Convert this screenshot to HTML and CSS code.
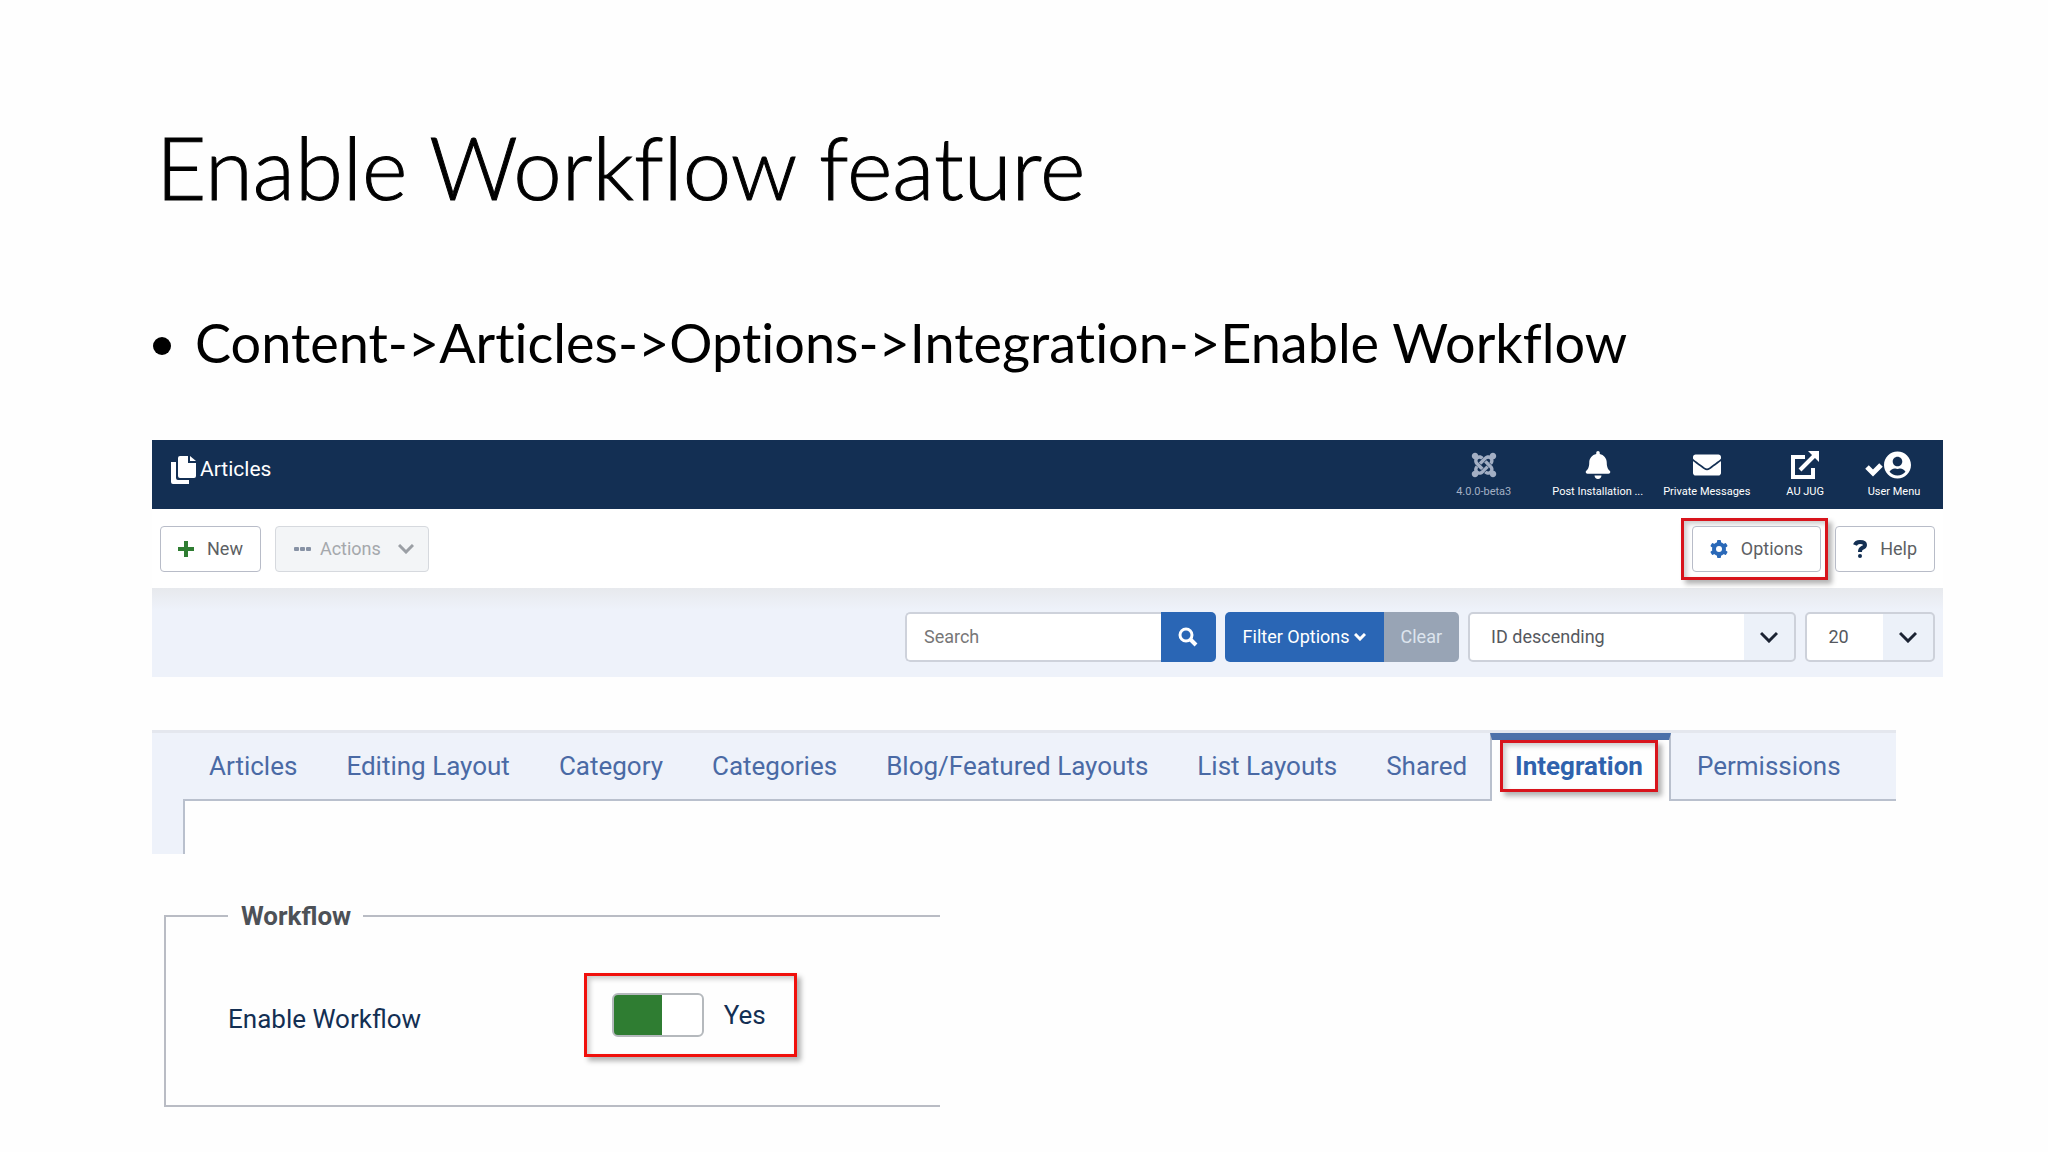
FILE: index.html
```
<!DOCTYPE html>
<html lang="en">
<head>
<meta charset="UTF-8">
<meta name="viewport" content="width=device-width, initial-scale=1.0">
<title>Enable Workflow feature</title>
<link rel="stylesheet" href="styles.css">
</head>
<body>

<main class="slide">
  <h1>Enable Workflow feature</h1>
  <ul class="points">
    <li>Content-&gt;Articles-&gt;Options-&gt;Integration-&gt;Enable Workflow</li>
  </ul>

  <section class="articles">
    <header class="topbar">
      <div class="page-title">
        <svg width="26" height="28" viewBox="0 0 26 28" fill="#fff"><path d="M0 6h5v16q0 2 2 2h11v4H2q-2 0-2-2z"/><path d="M9 0h8v7h8v13q0 2-2 2H9q-2 0-2-2V2q0-2 2-2z"/><path d="M19 0l6 5h-6z"/></svg>
        <span>Articles</span>
      </div>
      <nav class="top-links">
        <div class="top-item version">
          <svg width="26" height="28" viewBox="0 0 448 512" fill="currentColor"><path d="M.6 92.1C.6 58.8 27.4 32 60.4 32c30 0 54.5 21.9 59.2 50.2 32.6-7.6 67.1.6 96.5 30l-44.3 44.3c-20.5-20.5-42.6-16.3-55.4-3.5-14.3 14.3-14.3 37.9 0 52.2l99.5 99.5-44 44.3c-87.7-87.2-49.7-49.7-99.8-99.7-26.8-26.5-35-64.8-24.8-98.9C20.4 144.6.6 120.7.6 92.1zm129.5 116.4l44.3 44.3c10-10 89.7-89.7 99.7-99.8 14.3-14.3 37.6-14.3 51.9 0 12.8 12.8 17 35-3.5 55.4l44 44.3c31.2-31.2 38.5-67.6 28.9-101.2 29.2-4.1 51.9-29.2 51.9-59.5 0-33.2-26.8-60.1-59.8-60.1-30.3 0-55.4 22.5-59.5 51.6-33.8-9.9-71.7-1.5-98.3 25.1-18.3 19.1-71.1 71.5-99.6 99.9zm266.3 152.2c8.2-32.7-.9-68.5-26.3-93.9-11.8-12.2 5 4.7-99.5-99.7l-44.3 44.3 99.7 99.7c14.3 14.3 14.3 37.6 0 51.9-12.8 12.8-35 17-55.4-3.5l-44 44.3c27.6 30.2 68 38.8 102.7 28 5.5 27.4 29.7 48.1 58.9 48.1 33 0 59.8-26.8 59.8-60.1 0-30.2-22.5-55-51.6-59.1zm-84.3-53.1l-44-44.3c-87 86.4-50.4 50.4-99.7 99.8-14.3 14.3-37.6 14.3-51.9 0-13.1-13.4-16.9-35.3 3.2-55.4l-44-44.3c-30.2 30.2-38 65.2-29.5 98.3-26.7 6-46.2 29.9-46.2 58.2C0 453.2 26.8 480 59.8 480c28.6 0 52.5-19.8 58.6-46.7 32.7 8.2 68.5-.6 94.2-26 32.1-32 12.2-12.4 99.5-99.7z"/></svg>
          <span>4.0.0-beta3</span>
        </div>
        <a class="top-item post" href="#">
          <svg width="26" height="28" viewBox="0 0 448 512" fill="currentColor"><path d="M224 512c35.32 0 63.97-28.65 63.97-64H160.03c0 35.35 28.65 64 63.97 64zm215.39-149.71c-19.32-20.76-55.47-51.99-55.47-154.29 0-77.7-54.48-139.9-127.94-155.16V32c0-17.67-14.32-32-31.98-32s-31.98 14.33-31.98 32v20.84C118.56 68.1 64.08 130.3 64.08 208c0 102.3-36.15 133.53-55.47 154.29-6 6.45-8.66 14.16-8.61 21.71.11 16.4 12.98 32 32.1 32h383.8c19.12 0 32-15.6 32.1-32 .05-7.55-2.61-15.27-8.61-21.71z"/></svg>
          <span>Post Installation ...</span>
        </a>
        <a class="top-item messages" href="#">
          <svg width="28" height="28" viewBox="0 0 512 512" fill="currentColor"><path d="M502.3 190.8c3.9-3.1 9.7-.2 9.7 4.7V400c0 26.5-21.5 48-48 48H48c-26.5 0-48-21.5-48-48V195.6c0-5 5.7-7.8 9.7-4.7 22.4 17.4 52.1 39.5 154.1 113.6 21.1 15.4 56.7 47.8 92.2 47.6 35.7.3 72-32.8 92.3-47.6 102-74.1 131.6-96.3 154-113.7zM256 320c23.2.4 56.6-29.2 73.4-41.4 132.7-96.3 142.8-104.7 173.4-128.7 5.8-4.5 9.2-11.5 9.2-18.9v-19c0-26.5-21.5-48-48-48H48c-26.5 0-48 21.5-48 48v19c0 7.4 3.4 14.3 9.2 18.9 30.6 23.9 40.7 32.4 173.4 128.7 16.8 12.2 50.2 41.8 73.4 41.4z"/></svg>
          <span>Private Messages</span>
        </a>
        <a class="top-item" href="#">
          <svg width="28" height="28" viewBox="0 0 28 28" fill="none" stroke="currentColor" stroke-width="4"><path d="M14 6H2v20h20V17"/><path d="M9 19L23 5"/><path d="M17 0h11v11z" fill="currentColor" stroke="none"/></svg>
          <span>AU JUG</span>
        </a>
        <a class="top-item user" href="#">
          <svg width="46" height="28" viewBox="0 0 46 28" fill="currentColor"><path d="M2 16l6 6 8-8" fill="none" stroke="currentColor" stroke-width="5"/><svg x="19" y="0" width="27" height="28" viewBox="0 0 496 512"><path d="M248 8C111 8 0 119 0 256s111 248 248 248 248-111 248-248S385 8 248 8zm0 96c48.6 0 88 39.4 88 88s-39.4 88-88 88-88-39.4-88-88 39.4-88 88-88zm0 344c-58.7 0-111.3-26.6-146.5-68.2 18.8-35.4 55.6-59.8 98.5-59.8 2.4 0 4.8.4 7.1 1.1 13 4.2 26.6 6.9 40.9 6.9 14.3 0 28-2.7 40.9-6.9 2.3-.7 4.7-1.1 7.1-1.1 42.9 0 79.7 24.4 98.5 59.8C359.3 421.4 306.7 448 248 448z"/></svg></svg>
          <span>User Menu</span>
        </a>
      </nav>
    </header>

    <div class="toolbar">
      <button class="btn" type="button">
        <svg width="16" height="16" viewBox="0 0 16 16" stroke="#2f7d32" stroke-width="4"><path d="M8 0v16M0 8h16"/></svg>
        New
      </button>
      <button class="btn btn-actions" type="button" disabled>
        <svg width="18" height="6" viewBox="0 0 18 6" fill="#8792a5"><rect y="1" width="5" height="4" rx="1"/><rect x="6" y="1" width="5" height="4" rx="1"/><rect x="12" y="1" width="5" height="4" rx="1"/></svg>
        Actions
        <svg class="caret" width="16" height="10" viewBox="0 0 16 10" fill="none" stroke="#9b9fa5" stroke-width="3"><path d="M1 1l7 7 7-7"/></svg>
      </button>
      <span class="mark mark-options">
        <button class="btn" type="button">
          <svg width="18" height="18" viewBox="0 0 18 18"><g fill="#2a69b8"><rect x="7" y="0" width="4" height="18" rx="1"/><rect x="7" y="0" width="4" height="18" rx="1" transform="rotate(60 9 9)"/><rect x="7" y="0" width="4" height="18" rx="1" transform="rotate(120 9 9)"/><circle cx="9" cy="9" r="7"/></g><circle cx="9" cy="9" r="3" fill="#fff"/></svg>
          Options
        </button>
      </span>
      <button class="btn" type="button">
        <svg width="14" height="18" viewBox="0 0 14 18" fill="none" stroke="#132f53" stroke-width="4"><path d="M2 5Q3 2 7 2q5 0 5 3 0 2-3 3-2 1-2 4"/><circle cx="7" cy="16" r="2" fill="#132f53" stroke="none"/></svg>
        Help
      </button>
    </div>

    <form class="filters">
      <div class="group search">
        <input type="text" placeholder="Search" aria-label="Search">
        <button type="button" aria-label="Submit search">
          <svg width="20" height="20" viewBox="0 0 20 20" fill="none" stroke="#fff" stroke-width="3"><circle cx="8" cy="8" r="6"/><path d="M12 12l6 6" stroke-width="4"/></svg>
        </button>
      </div>
      <div class="group">
        <button class="filter-btn" type="button">Filter Options <svg width="12" height="8" viewBox="0 0 12 8" fill="none" stroke="#fff" stroke-width="3"><path d="M1 1l5 5 5-5"/></svg></button>
        <button class="clear-btn" type="button">Clear</button>
      </div>
      <div class="picker order">
        <select aria-label="Sort by"><option>ID descending</option></select>
        <svg width="18" height="12" viewBox="0 0 18 12" fill="none" stroke="#1b2333" stroke-width="3"><path d="M1 2l8 8 8-8"/></svg>
      </div>
      <div class="picker limit">
        <select aria-label="Items per page"><option>20</option></select>
        <svg width="18" height="12" viewBox="0 0 18 12" fill="none" stroke="#1b2333" stroke-width="3"><path d="M1 2l8 8 8-8"/></svg>
      </div>
    </form>
  </section>

  <section class="options">
    <nav class="tabs">
      <a href="#">Articles</a>
      <a href="#">Editing Layout</a>
      <a href="#">Category</a>
      <a href="#">Categories</a>
      <a href="#">Blog/Featured Layouts</a>
      <a href="#">List Layouts</a>
      <a href="#">Shared</a>
      <a class="active" href="#"><span class="mark">Integration</span></a>
      <a href="#">Permissions</a>
    </nav>
    <div class="tab-body"></div>
  </section>

  <fieldset class="workflow">
    <legend>Workflow</legend>
    <label class="name" for="workflow">Enable Workflow</label>
    <span class="mark mark-switch">
      <input type="checkbox" id="workflow" checked>
      <label for="workflow">Yes</label>
    </span>
  </fieldset>
</main>

</body>
</html>
```
FILE: styles.css
```
* {
  box-sizing: border-box;
}
body {
  margin: 0;
  background-color: #fefefe;
  font-family: Roboto, sans-serif;
  color: #132f53;
}
a {
  color: inherit;
  text-decoration: none;
}
svg {
  display: block;
  flex: none;
}
button, input, select {
  font-family: inherit;
  font-size: 18px;
}
.slide {
  padding: 117px 105px 40px 152px;
}
h1, .points {
  font-family: Lato, sans-serif;
  font-variant-ligatures: none;
  color: #000;
}
h1 {
  margin: 0 0 96px;
  padding-left: 4px;
  font-size: 87px;
  font-weight: 300;
  line-height: 100px;
  -webkit-text-stroke: 1px #000;
}
.points {
  margin: 0 0 67px;
  padding-left: 43px;
  font-size: 54px;
  line-height: 60px;
}

/* red call-out frame */
.mark {
  border: 3px solid #d8141c;
  box-shadow: 4px 4px 5px rgba(0, 0, 0, 0.3), inset 3px 3px 5px rgba(0, 0, 0, 0.2);
}

/* top bar */
.topbar {
  display: flex;
  justify-content: space-between;
  height: 69px;
  padding: 11px 20px 0 19px;
  background-color: #132f53;
  color: #fff;
}
.page-title {
  display: flex;
  align-items: center;
  gap: 3px;
  height: 36px;
  font-size: 21px;
}
.page-title svg {
  margin-top: 2px;
}
.top-links {
  display: flex;
}
.top-item {
  display: flex;
  flex-direction: column;
  align-items: center;
  justify-content: space-between;
  height: 48px;
  margin-left: 36px;
  font-size: 11px;
  line-height: 14px;
}
.post, .user {
  margin-left: 41px;
}
.messages {
  margin-left: 20px;
}
.user svg {
  margin-right: 12px;
}
.version {
  color: #a3afc4;
}

/* toolbar */
.toolbar {
  display: flex;
  align-items: center;
  height: 79px;
  padding: 0 8px;
  background-color: #fff;
}
.btn {
  display: flex;
  align-items: center;
  gap: 13px;
  height: 46px;
  padding: 0 17px;
  border: 1px solid #b8bcc8;
  border-radius: 4px;
  background-color: #fff;
  color: #5d5f64;
}
.btn-actions {
  gap: 8px;
  margin-left: 14px;
  padding: 0 14px 0 18px;
  background-color: #f3f5f7;
  border-color: #d6d9de;
  color: #a5a8ac;
}
.btn-actions .caret {
  margin-left: 9px;
}
.mark-options {
  margin: 0 7px 0 auto;
  padding: 5px 4px 5px 8px;
}

/* filters */
.filters {
  display: flex;
  justify-content: flex-end;
  align-items: center;
  gap: 9px;
  height: 89px;
  padding: 8px 8px 0;
  background: linear-gradient(#e7e9ed, #eef2fa 22px);
}
.group {
  display: flex;
  height: 50px;
  border-radius: 5px;
  overflow: hidden;
}
.group button {
  border: none;
  color: #fff;
}
.search {
  width: 17.5%;
}
.search input {
  flex: 1;
  min-width: 0;
  padding: 0 17px;
  border: 2px solid #ced2db;
  border-right: none;
  border-radius: 5px 0 0 5px;
}
.search input::placeholder {
  color: #777;
}
.search button {
  display: flex;
  align-items: center;
  justify-content: center;
  width: 55px;
  background-color: #2a66b5;
}
.group .filter-btn {
  display: flex;
  align-items: center;
  gap: 4px;
  padding: 0 18px;
  background-color: #2a66b5;
}
.group .clear-btn {
  padding: 0 17px;
  background-color: #98a4b5;
  color: #dde4ee;
}
.picker {
  display: grid;
  align-items: center;
}
.picker select, .picker svg {
  grid-area: 1 / 1;
}
.picker select {
  width: 100%;
  height: 50px;
  padding: 0 21px;
  border: 2px solid #cdd1da;
  border-radius: 5px;
  background: linear-gradient(to left, #ecf1f9 50px, #fff 50px);
  color: #55585e;
  appearance: none;
}
.picker svg {
  justify-self: end;
  margin-right: 18px;
  pointer-events: none;
}
.order {
  width: 18.5%;
}
.limit {
  width: 7.3%;
}

/* options tabs */
.options {
  margin: 53px 47px 0 0;
  padding-left: 31px;
  border-top: 3px solid #e4e7ee;
  background-color: #eef2fa;
}
.tabs {
  display: flex;
  height: 68px;
  font-size: 26px;
  line-height: 66px;
  color: #4a6aa5;
}
.tabs a {
  padding: 0 23px 0 26px;
  border-bottom: 2px solid #b9c0cd;
  white-space: nowrap;
}
.tabs a:last-child {
  flex: 1;
}
.tabs .active {
  display: flex;
  align-items: flex-start;
  padding: 0 11px 0 8px;
  border: solid #b9c0cd;
  border-width: 0 2px;
  border-top: 7px solid #4c71aa;
  background-color: #fefefe;
  font-weight: bold;
  color: #2f62ad;
}
.active .mark {
  padding: 0 12px;
  line-height: 46px;
}
.tab-body {
  height: 53px;
  border-left: 2px solid #b9c0cd;
  background-color: #fefefe;
}

/* workflow switch */
.workflow {
  display: flex;
  align-items: center;
  width: 43.3%;
  margin: 47px 0 0 12px;
  padding: 42px 0 48px 62px;
  border: 2px solid #b9bcc4;
  border-right: none;
  font-size: 26px;
}
.workflow legend {
  padding: 0 12px 0 13px;
  font-weight: bold;
  line-height: 30px;
  color: #4d5157;
}
.name {
  width: 50%;
  padding-top: 8px;
}
.mark-switch {
  display: flex;
  align-items: center;
  gap: 20px;
  height: 84px;
  padding: 0 28px 0 25px;
  border-color: #f0100c;
}
.mark-switch input {
  width: 92px;
  height: 44px;
  margin: 0;
  border: 2px solid #b5b9bd;
  border-radius: 6px;
  background: linear-gradient(to right, #2f7d32 48px, #fff 48px);
  appearance: none;
}
```
